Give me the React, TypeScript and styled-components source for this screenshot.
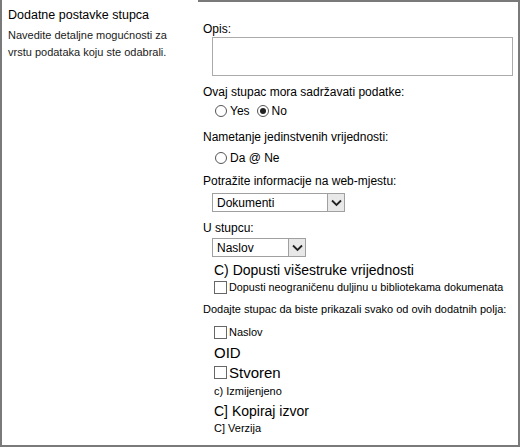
import styled, { createGlobalStyle } from 'styled-components'

const GlobalStyle = createGlobalStyle`
  html, body {
    margin: 0;
    padding: 0;
    background: #ffffff;
  }
  body {
    font-family: 'Liberation Sans', Arial, sans-serif;
    color: #000;
  }
`

const Frame = styled.div`
  width: 520px;
  height: 447px;
  box-sizing: border-box;
  border-left: 2px solid #7a7a7a;
  border-right: 2px solid #7a7a7a;
  border-bottom: 2px solid #7a7a7a;
  display: grid;
  grid-template-columns: 196px 1fr;
  overflow: hidden;
`

const Side = styled.div`
  padding: 7px 0 0 6px;
`

const SideTitle = styled.div`
  font-size: 12.5px;
  line-height: 16px;
  margin-bottom: 4px;
`

const SideText = styled.div`
  font-size: 11px;
  line-height: 17px;
  color: #1a1a1a;
`

const Main = styled.div`
  border-top: 2px solid #7a7a7a;
  padding: 20px 0 0 5px;
  display: flex;
  flex-direction: column;
`

const Label = styled.div<{ $gap?: number; $small?: boolean }>`
  font-size: ${p => (p.$small ? 11 : 12)}px;
  line-height: 15px;
  margin-top: ${p => p.$gap ?? 0}px;
`

const Indent = styled.div<{ $gap?: number }>`
  padding-left: 9px;
  margin-top: ${p => p.$gap ?? 0}px;
`

const TextBox = styled.div`
  width: 301px;
  height: 39px;
  box-sizing: border-box;
  border: 1px solid #ababab;
`

const RadioRow = styled.div<{ $gap?: number }>`
  display: flex;
  align-items: center;
  gap: 3px;
  padding-left: 12px;
  margin-top: ${p => p.$gap ?? 0}px;
  font-size: 12px;
  line-height: 16px;
`

const Radio = styled.span<{ $on?: boolean }>`
  width: 12px;
  height: 12px;
  box-sizing: border-box;
  border-radius: 50%;
  border: 1px solid #555;
  display: inline-flex;
  align-items: center;
  justify-content: center;
  margin-left: 4px;

  &:first-child {
    margin-left: 0;
  }

  &::after {
    content: '';
    width: 6px;
    height: 6px;
    border-radius: 50%;
    background: ${p => (p.$on ? '#222' : 'transparent')};
  }
`

const Select = styled.div<{ $w: number }>`
  width: ${p => p.$w}px;
  height: 19px;
  box-sizing: border-box;
  border: 1px solid #a0a0a0;
  display: flex;
  align-items: stretch;
  font-size: 12px;
`

const SelectText = styled.div`
  flex: 1;
  padding: 2px 0 0 4px;
  line-height: 15px;
`

const SelectButton = styled.div`
  width: 16px;
  border-left: 1px solid #a0a0a0;
  background: #e8e8e8;
  display: flex;
  align-items: center;
  justify-content: center;
`

const Box = styled.span`
  width: 13px;
  height: 13px;
  box-sizing: border-box;
  border: 1px solid #666;
  display: inline-block;
  flex-shrink: 0;
  background: #fff;
`

const Item = styled.div<{ $size: number; $gap?: number }>`
  display: flex;
  align-items: center;
  gap: 2px;
  padding-left: 11px;
  font-size: ${p => p.$size}px;
  line-height: ${p => p.$size + 4}px;
  margin-top: ${p => p.$gap ?? 0}px;
`

const Chevron = () => (
  <svg width="11" height="8" viewBox="0 0 11 8">
    <path d="M1 1.5 L5.5 6 L10 1.5" fill="none" stroke="#222" strokeWidth="1.8" />
  </svg>
)

export default function App() {
  return (
    <>
      <GlobalStyle />
      <Frame>
        <Side>
          <SideTitle>Dodatne postavke stupca</SideTitle>
          <SideText>
            Navedite detaljne mogućnosti za
            <br />
            vrstu podataka koju ste odabrali.
          </SideText>
        </Side>
        <Main>
          <Label>Opis:</Label>
          <Indent>
            <TextBox />
          </Indent>
          <Label $gap={9}>Ovaj stupac mora sadržavati podatke:</Label>
          <RadioRow $gap={3}>
            <Radio />
            Yes
            <Radio $on />
            No
          </RadioRow>
          <Label $gap={11}>Nametanje jedinstvenih vrijednosti:</Label>
          <RadioRow $gap={5}>
            <Radio />
            Da @ Ne
          </RadioRow>
          <Label $gap={8}>Potražite informacije na web-mjestu:</Label>
          <Indent $gap={4}>
            <Select $w={133}>
              <SelectText>Dokumenti</SelectText>
              <SelectButton>
                <Chevron />
              </SelectButton>
            </Select>
          </Indent>
          <Label $gap={9}>U stupcu:</Label>
          <Indent $gap={2}>
            <Select $w={94}>
              <SelectText>Naslov</SelectText>
              <SelectButton>
                <Chevron />
              </SelectButton>
            </Select>
          </Indent>
          <Item $size={14} $gap={4}>C) Dopusti višestruke vrijednosti</Item>
          <Item $size={10.8} $gap={1}>
            <Box />
            Dopusti neograničenu duljinu u bibliotekama dokumenata
          </Item>
          <Label $gap={7} $small>
            Dodajte stupac da biste prikazali svako od ovih dodatnih polja:
          </Label>
          <Item $size={11} $gap={8}>
            <Box />
            Naslov
          </Item>
          <Item $size={15} $gap={3}>OID</Item>
          <Item $size={15} $gap={1}>
            <Box />
            Stvoren
          </Item>
          <Item $size={11} $gap={2}>c) Izmijenjeno</Item>
          <Item $size={14} $gap={3}>C] Kopiraj izvor</Item>
          <Item $size={11} $gap={1}>C] Verzija</Item>
        </Main>
      </Frame>
    </>
  )
}
